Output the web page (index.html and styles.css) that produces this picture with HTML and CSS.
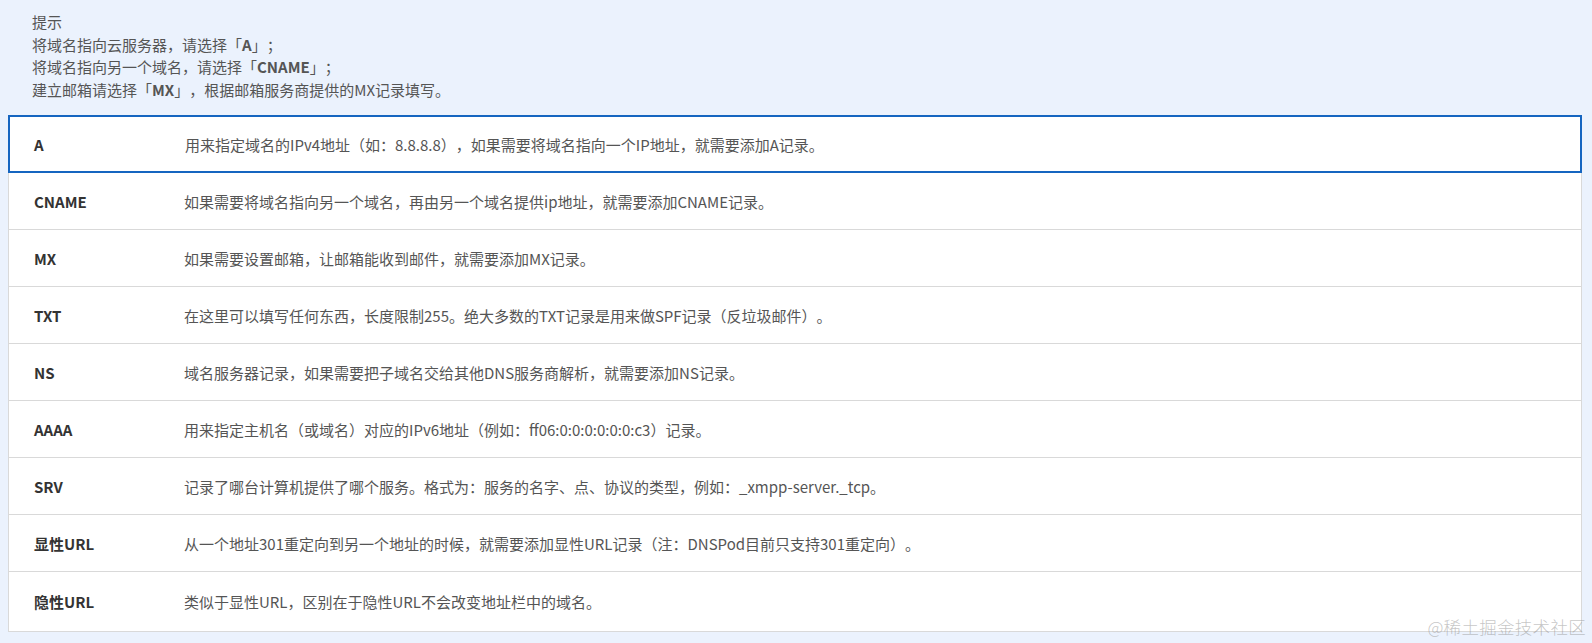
FILE: index.html
```html
<!DOCTYPE html>
<html lang="zh-CN">
<head>
<meta charset="utf-8">
<title>记录类型</title>
<link rel="stylesheet" href="styles.css">
</head>
<body>
<div class="page">
  <div class="tips">
    <div>提示</div>
    <div>将域名指向云服务器，请选择「<b>A</b>」；</div>
    <div>将域名指向另一个域名，请选择「<b>CNAME</b>」；</div>
    <div>建立邮箱请选择「<b>MX</b>」，根据邮箱服务商提供的MX记录填写。</div>
  </div>
  <div class="table">
    <div class="row active"><div class="type">A</div><div class="desc">用来指定域名的IPv4地址（如：8.8.8.8），如果需要将域名指向一个IP地址，就需要添加A记录。</div></div>
    <div class="row"><div class="type">CNAME</div><div class="desc">如果需要将域名指向另一个域名，再由另一个域名提供ip地址，就需要添加CNAME记录。</div></div>
    <div class="row"><div class="type">MX</div><div class="desc">如果需要设置邮箱，让邮箱能收到邮件，就需要添加MX记录。</div></div>
    <div class="row"><div class="type">TXT</div><div class="desc">在这里可以填写任何东西，长度限制255。绝大多数的TXT记录是用来做SPF记录（反垃圾邮件）。</div></div>
    <div class="row"><div class="type">NS</div><div class="desc">域名服务器记录，如果需要把子域名交给其他DNS服务商解析，就需要添加NS记录。</div></div>
    <div class="row"><div class="type">AAAA</div><div class="desc">用来指定主机名（或域名）对应的IPv6地址（例如：ff06:0:0:0:0:0:0:c3）记录。</div></div>
    <div class="row"><div class="type">SRV</div><div class="desc">记录了哪台计算机提供了哪个服务。格式为：服务的名字、点、协议的类型，例如：_xmpp-server._tcp。</div></div>
    <div class="row"><div class="type">显性URL</div><div class="desc">从一个地址301重定向到另一个地址的时候，就需要添加显性URL记录（注：DNSPod目前只支持301重定向）。</div></div>
    <div class="row"><div class="type">隐性URL</div><div class="desc">类似于显性URL，区别在于隐性URL不会改变地址栏中的域名。</div></div>
  </div>
  <div class="watermark">@稀土掘金技术社区</div>
</div>
</body>
</html>
```
FILE: styles.css
```css
html, body {
  margin: 0;
  padding: 0;
  background: #ebf2fd;
}
body {
  font-family: "Noto Sans CJK SC", "Liberation Sans", sans-serif;
  font-size: 15px;
  color: #555;
  text-spacing-trim: space-all;
}
.page {
  position: relative;
  height: 643px;
  padding: 11px 10px 0 8px;
  box-sizing: border-box;
}
.tips {
  padding-left: 24px;
  line-height: 22.6px;
  color: #555;
  margin-bottom: 14px;
}
.tips b {
  color: #555;
  font-weight: 700;
}
.table {
  background: #fff;
  border: 1px solid #d9d9d9;
}
.row {
  display: grid;
  grid-template-columns: 175px 1fr;
  align-items: center;
  height: 57px;
  box-sizing: border-box;
  border-bottom: 1px solid #d9d9d9;
}
.row:last-child {
  border-bottom: none;
  height: 59px;
}
.row.active {
  margin: -1px -1px 0 -1px;
  height: 58px;
  border: 2px solid #1565c0;
}
.row.active .type {
  padding-left: 24px;
}
.type {
  padding-left: 25px;
  font-weight: 700;
  color: #333;
}
.desc {
  color: #555;
}
.watermark {
  position: absolute;
  right: 6px;
  bottom: 4px;
  font-size: 17.5px;
  font-weight: 300;
  color: rgba(150, 150, 150, 0.55);
  letter-spacing: 0.3px;
}
```
